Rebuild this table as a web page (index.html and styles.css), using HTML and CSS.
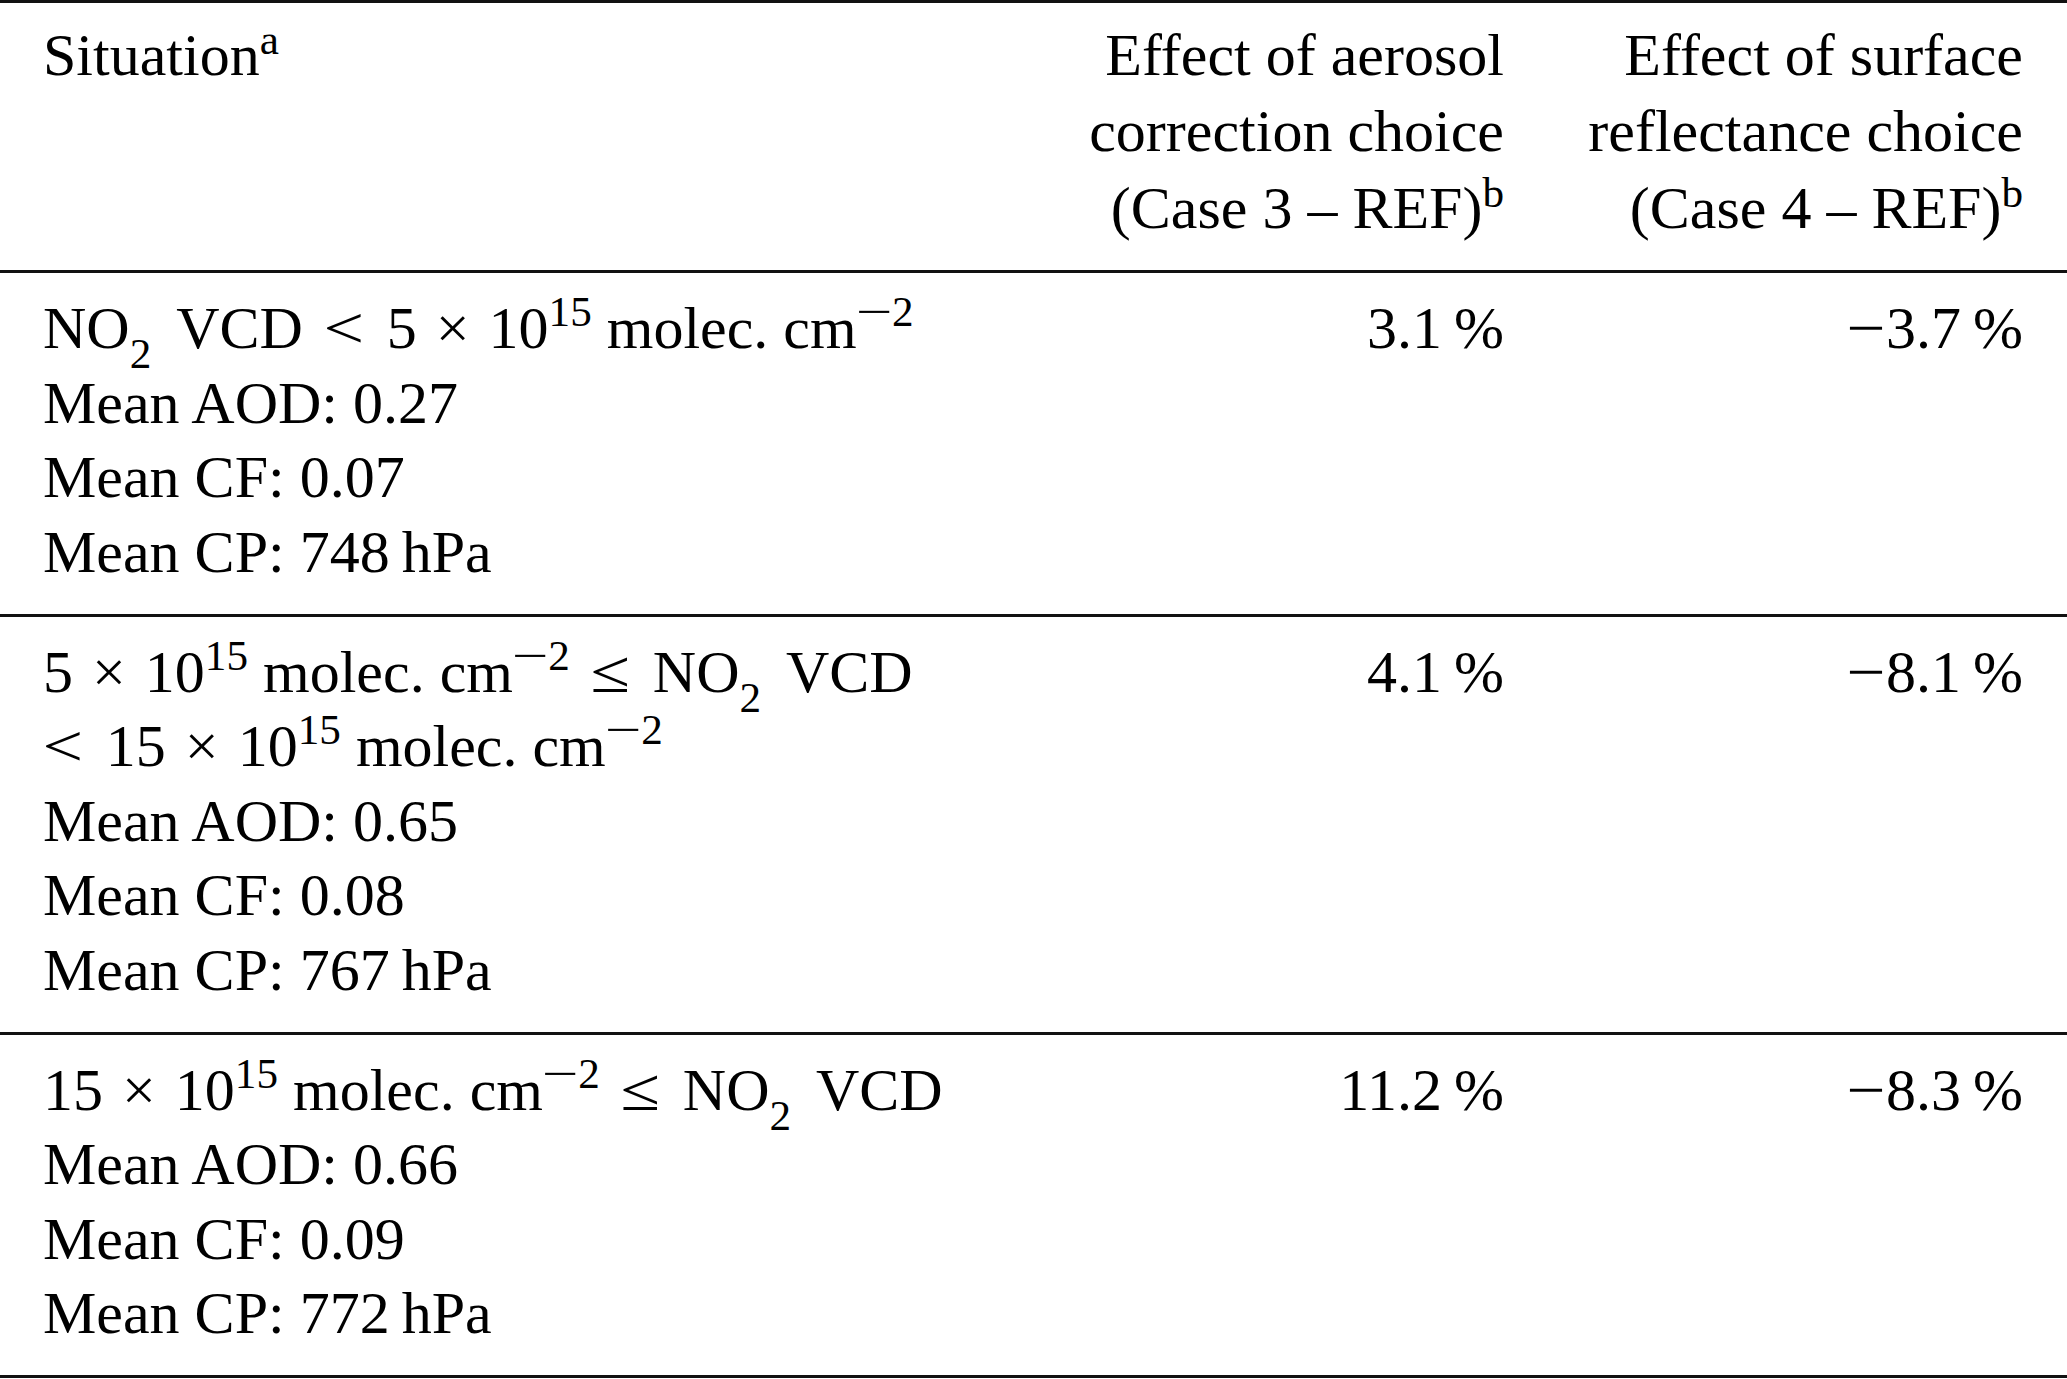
FILE: index.html
```html
<!DOCTYPE html>
<html lang="en">
<head>
<meta charset="utf-8">
<title>Table</title>
<link rel="stylesheet" href="styles.css">
</head>
<body>
<table class="data">
  <colgroup>
    <col class="c1">
    <col class="c2">
    <col class="c3">
  </colgroup>
  <thead>
    <tr>
      <th class="left">Situation<sup class="tsup">a</sup></th>
      <th class="right mid">Effect of aerosol<br>correction choice<br>(Case 3 – REF)<sup class="tsup">b</sup></th>
      <th class="right last">Effect of surface<br>reflectance choice<br>(Case 4 – REF)<sup class="tsup">b</sup></th>
    </tr>
  </thead>
  <tbody>
    <tr>
      <td class="left">NO<sub class="msub">2</sub> VCD <span class="rel">&lt;</span> 5 <span class="bin">×</span> 10<sup class="msup">15</sup> molec. cm<sup class="msup"><span class="mminus">−</span>2</sup><br>Mean AOD: 0.27<br>Mean CF: 0.07<br>Mean CP: 748&thinsp;hPa</td>
      <td class="right mid">3.1&thinsp;%</td>
      <td class="right last"><span class="minus">−</span>3.7&thinsp;%</td>
    </tr>
    <tr>
      <td class="left">5 <span class="bin">×</span> 10<sup class="msup">15</sup> molec. cm<sup class="msup"><span class="mminus">−</span>2</sup> <span class="rel">≤</span> NO<sub class="msub">2</sub> VCD<br><span class="rel first">&lt;</span> 15 <span class="bin">×</span> 10<sup class="msup">15</sup> molec. cm<sup class="msup"><span class="mminus">−</span>2</sup><br>Mean AOD: 0.65<br>Mean CF: 0.08<br>Mean CP: 767&thinsp;hPa</td>
      <td class="right mid">4.1&thinsp;%</td>
      <td class="right last"><span class="minus">−</span>8.1&thinsp;%</td>
    </tr>
    <tr>
      <td class="left">15 <span class="bin">×</span> 10<sup class="msup">15</sup> molec. cm<sup class="msup"><span class="mminus">−</span>2</sup> <span class="rel">≤</span> NO<sub class="msub">2</sub> VCD<br>Mean AOD: 0.66<br>Mean CF: 0.09<br>Mean CP: 772&thinsp;hPa</td>
      <td class="right mid">11.2&thinsp;%</td>
      <td class="right last"><span class="minus">−</span>8.3&thinsp;%</td>
    </tr>
  </tbody>
</table>
</body>
</html>
```

FILE: styles.css
```css
html, body {
  margin: 0;
  padding: 0;
  background: #ffffff;
  overflow: hidden;
}

body {
  font-family: "Liberation Serif", "Times New Roman", serif;
  font-size: 60px;
  color: #000000;
}

.data {
  width: 2067px;
  table-layout: fixed;
  border-collapse: separate;
  border-spacing: 0;
  border-top: 3px solid #111111;
}

.c1 { width: 1064px; }
.c2 { width: 482px; }
.c3 { width: 521px; }

.data th,
.data td {
  font-weight: normal;
  line-height: 74.5px;
  white-space: nowrap;
  vertical-align: top;
  border-bottom: 3px solid #111111;
  padding-top: 18px;
  padding-bottom: 24.5px;
}

.data th {
  line-height: 76.5px;
  padding-top: 13.5px;
  padding-bottom: 24px;
}

.left {
  text-align: left;
  padding-left: 43px;
  padding-right: 0;
}

.right {
  text-align: right;
  padding-left: 0;
}

.mid { padding-right: 42px; }
.last { padding-right: 44px; }

.tsup {
  font-size: 0.72em;
  line-height: 0;
  vertical-align: 21px;
}

.msup {
  font-size: 0.72em;
  line-height: 0;
  vertical-align: 22px;
}

.msub {
  font-size: 0.72em;
  line-height: 0;
  vertical-align: -20px;
  margin-right: 11px;
}

.rel {
  display: inline-block;
  margin: 0 11px 0 9px;
  transform: scaleX(1.2);
}

.rel.first {
  margin-left: 3px;
}

.bin {
  margin: 0 4px;
}

.mminus {
  display: inline-block;
  margin: 0 6px 0 5px;
  transform: scaleX(1.5);
}

.minus {
  display: inline-block;
  margin-right: 3px;
  transform: scaleX(1.15);
}
```
